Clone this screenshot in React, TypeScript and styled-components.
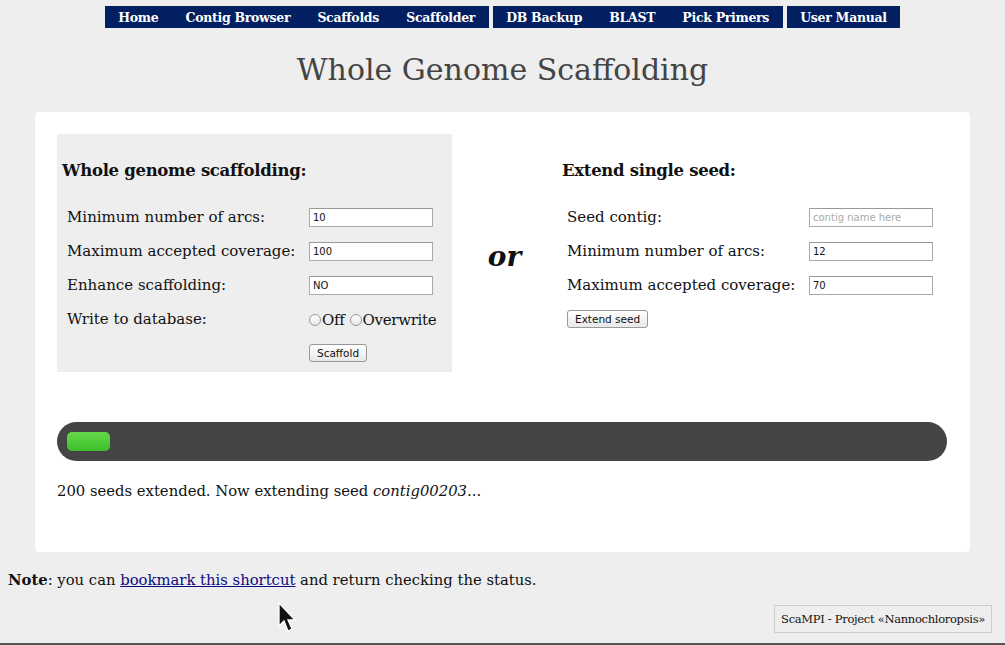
import React from "react";
import styled, { createGlobalStyle } from "styled-components";

const Global = createGlobalStyle`
  html, body { margin: 0; padding: 0; background: #eeeeee; }
  body { font-family: "DejaVu Serif", "Liberation Serif", serif; color: #111; }
`;

const Page = styled.div`
  position: relative;
  height: 645px;
  box-sizing: border-box;
  display: flex;
  flex-direction: column;
  padding: 6px 8px 0 8px;
  overflow: hidden;
`;

const Nav = styled.nav`
  display: flex;
  justify-content: center;
  gap: 4px;
`;

const NavGroup = styled.div`
  display: flex;
  background: #022061;
  height: 22px;
  align-items: center;
`;

const NavItem = styled.a`
  color: #fff;
  font-weight: bold;
  font-size: 12.5px;
  letter-spacing: -0.3px;
  padding: 0 13.6px;
  white-space: nowrap;
`;

const Title = styled.h1`
  margin: 22px 0 0 0;
  text-align: center;
  font-weight: normal;
  font-size: 30px;
  color: #444;
  line-height: 40px;
`;

const Card = styled.div`
  margin: 22px 27px 0 27px;
  background: #fff;
  border-radius: 4px;
  padding: 22px 23px 0 22px;
  height: 440px;
  box-sizing: border-box;
`;

const Forms = styled.div`
  display: flex;
  align-items: flex-start;
`;

const Panel = styled.div<{ $gray?: boolean }>`
  width: 395px;
  flex-shrink: 0;
  height: 238px;
  box-sizing: border-box;
  background: ${(p) => (p.$gray ? "#eeeeee" : "transparent")};
  padding: 25px 0 0 5px;
`;

const PanelTitle = styled.h3`
  margin: 0 0 25px 0;
  font-size: 16.5px;
  font-weight: bold;
  letter-spacing: -0.3px;
  line-height: 24px;
`;

const FieldGrid = styled.div`
  display: grid;
  grid-template-columns: 242px 124px;
  row-gap: 15px;
  padding-left: 5px;
  align-items: center;
`;

const Label = styled.label`
  font-size: 15px;
  line-height: 19px;
  white-space: nowrap;
`;

const Input = styled.input`
  width: 124px;
  height: 19px;
  box-sizing: border-box;
  border: 1px solid #aaa;
  border-top-color: #999;
  padding: 0 3px;
  font-family: "DejaVu Sans", "Liberation Sans", sans-serif;
  font-size: 10px;
  color: #111;
  background: #fff;
  outline: none;
  &::placeholder { color: #aaa; }
`;

const Radios = styled.div`
  display: flex;
  align-items: center;
  font-size: 15px;
  letter-spacing: -0.3px;
  white-space: nowrap;
`;

const RadioCircle = styled.span<{ $first?: boolean }>`
  display: inline-block;
  flex-shrink: 0;
  width: 12px;
  height: 12px;
  border-radius: 50%;
  border: 1px solid #999;
  background: linear-gradient(#fff, #e6e6e6);
  box-sizing: border-box;
  margin: 1px 1px 0 ${(p) => (p.$first ? 0 : 5)}px;
`;

const Button = styled.button`
  height: 18px;
  padding: 0 7px;
  font-family: "DejaVu Sans", "Liberation Sans", sans-serif;
  font-size: 10.5px;
  color: #111;
  border: 1px solid #999;
  border-radius: 3px;
  background: linear-gradient(#fff, #e8e8e8);
  justify-self: start;
  line-height: 16px;
`;

const OrCol = styled.div`
  width: 105px;
  flex-shrink: 0;
  height: 238px;
  display: flex;
  align-items: center;
  justify-content: center;
  padding-top: 6px;
  box-sizing: border-box;
`;

const Or = styled.span`
  font-size: 28px;
  font-weight: bold;
  font-style: italic;
`;

const Progress = styled.div`
  margin-top: 50px;
  height: 39px;
  border-radius: 20px;
  background: #454545;
  display: flex;
  align-items: center;
  padding: 0 10px;
`;

const Bar = styled.div`
  height: 19px;
  border-radius: 5px;
  background: linear-gradient(#66d84a, #3cbf2a);
`;

const Status = styled.p`
  margin: 21px 0 0 0;
  font-size: 14.8px;
`;

const Note = styled.p`
  margin: 19px 0 0 0;
  font-size: 14.8px;
`;

const Link = styled.a`
  color: #0b0b80;
  text-decoration: underline;
`;

const FooterRow = styled.div`
  display: flex;
  justify-content: flex-end;
  margin-top: 17px;
  margin-right: 5px;
`;

const Badge = styled.div`
  border: 1px solid #ccc;
  background: #eeeeee;
  font-size: 11.5px;
  letter-spacing: -0.3px;
  padding: 6px 6px;
  height: 28px;
  box-sizing: border-box;
  white-space: nowrap;
`;

const BottomEdge = styled.div`
  margin: auto -8px 0 -8px;
  height: 2px;
  background: #555;
`;

const Cursor = styled.svg`
  position: absolute;
  left: 278px;
  top: 602px;
`;

export default function App() {
  return (
    <Page>
      <Global />
      <Nav>
        <NavGroup>
          <NavItem>Home</NavItem>
          <NavItem>Contig Browser</NavItem>
          <NavItem>Scaffolds</NavItem>
          <NavItem>Scaffolder</NavItem>
        </NavGroup>
        <NavGroup>
          <NavItem>DB Backup</NavItem>
          <NavItem>BLAST</NavItem>
          <NavItem>Pick Primers</NavItem>
        </NavGroup>
        <NavGroup>
          <NavItem>User Manual</NavItem>
        </NavGroup>
      </Nav>
      <Title>Whole Genome Scaffolding</Title>
      <Card>
        <Forms>
          <Panel $gray>
            <PanelTitle>Whole genome scaffolding:</PanelTitle>
            <FieldGrid>
              <Label>Minimum number of arcs:</Label>
              <Input defaultValue="10" />
              <Label>Maximum accepted coverage:</Label>
              <Input defaultValue="100" />
              <Label>Enhance scaffolding:</Label>
              <Input defaultValue="NO" />
              <Label>Write to database:</Label>
              <Radios>
                <RadioCircle $first />
                <span>Off</span>
                <RadioCircle />
                <span>Overwrite</span>
              </Radios>
              <span />
              <Button>Scaffold</Button>
            </FieldGrid>
          </Panel>
          <OrCol>
            <Or>or</Or>
          </OrCol>
          <Panel>
            <PanelTitle>Extend single seed:</PanelTitle>
            <FieldGrid>
              <Label>Seed contig:</Label>
              <Input placeholder="contig name here" />
              <Label>Minimum number of arcs:</Label>
              <Input defaultValue="12" />
              <Label>Maximum accepted coverage:</Label>
              <Input defaultValue="70" />
              <Button>Extend seed</Button>
            </FieldGrid>
          </Panel>
        </Forms>
        <Progress>
          <Bar style={{ width: 43 }} />
        </Progress>
        <Status>
          200 seeds extended. Now extending seed <i>contig00203</i>...
        </Status>
      </Card>
      <Note>
        <b>Note</b>: you can <Link href="#">bookmark this shortcut</Link> and return checking the status.
      </Note>
      <FooterRow>
        <Badge>ScaMPI - Project «Nannochloropsis»</Badge>
      </FooterRow>
      <BottomEdge />
      <Cursor width="20" height="32" viewBox="0 0 20 32">
        <path d="M1 1 L1 24 L6 19 L10 29 L14 27 L10 18 L17 18 Z" fill="#111" stroke="#fff" strokeWidth="1.3" />
      </Cursor>
    </Page>
  );
}
